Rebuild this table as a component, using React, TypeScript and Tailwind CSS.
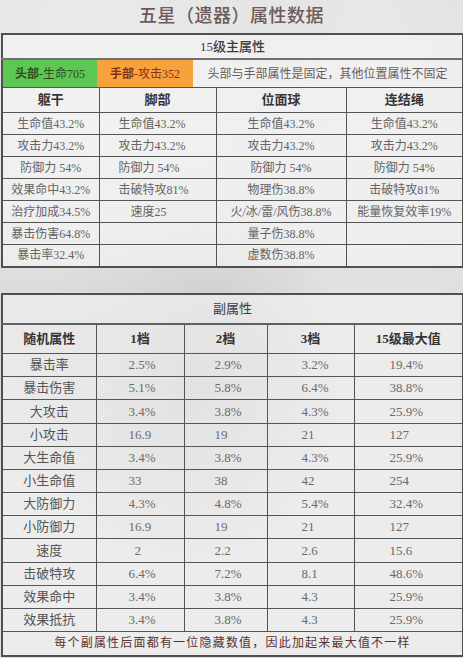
import React from "react";

const main1: string[][] = [
  ["生命值43.2%", "生命值43.2%", "生命值43.2%", "生命值43.2%"],
  ["攻击力43.2%", "攻击力43.2%", "攻击力43.2%", "攻击力43.2%"],
  ["防御力 54%", "防御力 54%", "防御力 54%", "防御力 54%"],
  ["效果命中43.2%", "击破特攻81%", "物理伤38.8%", "击破特攻81%"],
  ["治疗加成34.5%", "速度25", "火/冰/雷/风伤38.8%", "能量恢复效率19%"],
  ["暴击伤害64.8%", "", "量子伤38.8%", ""],
  ["暴击率32.4%", "", "虚数伤38.8%", ""],
];

const sub: string[][] = [
  ["暴击率", "2.5%", "2.9%", "3.2%", "19.4%"],
  ["暴击伤害", "5.1%", "5.8%", "6.4%", "38.8%"],
  ["大攻击", "3.4%", "3.8%", "4.3%", "25.9%"],
  ["小攻击", "16.9", "19", "21", "127"],
  ["大生命值", "3.4%", "3.8%", "4.3%", "25.9%"],
  ["小生命值", "33", "38", "42", "254"],
  ["大防御力", "4.3%", "4.8%", "5.4%", "32.4%"],
  ["小防御力", "16.9", "19", "21", "127"],
  ["速度", "2", "2.2", "2.6", "15.6"],
  ["击破特攻", "6.4%", "7.2%", "8.1", "48.6%"],
  ["效果命中", "3.4%", "3.8%", "4.3", "25.9%"],
  ["效果抵抗", "3.4%", "3.8%", "4.3", "25.9%"],
];

const subPad = ["", "pl-[32px]", "pl-[30px]", "pl-[34px]", "pl-[35px]"];
const mainRowH = ["h-[22px]", "h-[22px]", "h-[22px]", "h-[22px]", "h-[22px]", "h-[22px]", "h-[22px]"];
const subRowH = ["h-[23px]", "h-[23px]", "h-[24px]", "h-[23px]", "h-[23px]", "h-[23px]", "h-[23px]", "h-[23px]", "h-[24px]", "h-[23px]", "h-[23px]", "h-[23px]"];

export default function App() {
  return (
    <div className="w-[463px] h-[658px] overflow-hidden bg-[#dedede] bg-[radial-gradient(ellipse_at_20%_10%,#ececec_0%,transparent_45%),radial-gradient(ellipse_at_80%_8%,#e8e8e8_0%,transparent_40%),radial-gradient(ellipse_at_40%_55%,#c4bfbf_0%,transparent_40%),radial-gradient(ellipse_at_15%_50%,#d2cdcd_0%,transparent_35%)] font-['Liberation_Serif','Noto_Sans_CJK_SC',serif] text-[#646464]">
      <div className="h-[33px] flex items-center justify-center text-[18px] font-medium text-[#6c5a5a] tracking-[0.5px]">
        五星（遗器）属性数据
      </div>

      <div className="px-[1px]">
        <table className="w-[461px] table-fixed border-collapse border-2 border-[#505050] bg-[#f3f3f3]/70">
          <colgroup>
            <col className="w-[97px]" />
            <col className="w-[117px]" />
            <col className="w-[130px]" />
            <col className="w-[117px]" />
          </colgroup>
          <tbody>
            <tr className="h-[25px]">
              <td colSpan={4} className="border-b-2 border-[#707070] text-center text-[13px] font-medium text-[#3c3c3c] p-0">
                15级主属性
              </td>
            </tr>
            <tr className="h-[27px]">
              <td colSpan={4} className="p-0 border-b border-[#555]">
                <div className="flex h-[27px] text-[12px]">
                  <div className="w-[94px] bg-[#5ec653] flex items-center justify-center text-[#2d4a22]">
                    <span className="font-bold">头部</span>-生命705
                  </div>
                  <div className="w-[96px] bg-[#f8a23c] flex items-center justify-center text-[#86301a]">
                    <span className="font-bold">手部</span>-攻击352
                  </div>
                  <div className="flex-1 flex items-center justify-center text-[#6a5c5c]">
                    头部与手部属性是固定，其他位置属性不固定
                  </div>
                </div>
              </td>
            </tr>
            <tr className="h-[25px]">
              {["躯干", "脚部", "位面球", "连结绳"].map((h) => (
                <td key={h} className="border border-[#555] text-center text-[13px] font-bold text-[#353535] p-0">
                  {h}
                </td>
              ))}
            </tr>
            {main1.map((row, i) => (
              <tr key={i} className={mainRowH[i]}>
                {row.map((c, j) => (
                  <td
                    key={j}
                    className={
                      "border border-[#555] text-[12px] p-0 whitespace-nowrap " +
                      (j === 1 ? (c === "速度25" ? "text-left pl-[31px]" : "text-left pl-[19px]") : "text-center")
                    }
                  >
                    {c}
                  </td>
                ))}
              </tr>
            ))}
          </tbody>
        </table>
      </div>

      <div className="h-[25px]" />

      <div className="px-[1px]">
        <table className="w-[461px] table-fixed border-collapse border-2 border-[#505050] bg-[#f3f3f3]/65">
          <colgroup>
            <col className="w-[94px]" />
            <col className="w-[88px]" />
            <col className="w-[83px]" />
            <col className="w-[87px]" />
            <col className="w-[109px]" />
          </colgroup>
          <tbody>
            <tr className="h-[30px]">
              <td colSpan={5} className="border-b-2 border-[#606060] text-center text-[13px] text-[#3c3c3c] p-0">
                副属性
              </td>
            </tr>
            <tr className="h-[30px]">
              {["随机属性", "1档", "2档", "3档", "15级最大值"].map((h) => (
                <td key={h} className="border border-[#555] text-center text-[13px] font-bold text-[#353535] p-0">
                  {h}
                </td>
              ))}
            </tr>
            {sub.map((row, i) => (
              <tr key={i} className={subRowH[i]}>
                {row.map((c, j) => (
                  <td
                    key={j}
                    className={
                      "border border-[#555] p-0 whitespace-nowrap " +
                      (j === 0
                        ? "text-center text-[13px] text-[#555]"
                        : "text-left text-[13px] text-[#6a6a6a] " + subPad[j] + (c === "2" ? " pl-[38px]" : ""))
                    }
                  >
                    {c}
                  </td>
                ))}
              </tr>
            ))}
            <tr className="h-[24px]">
              <td colSpan={5} className="border-t border-[#555] text-center text-[12px] tracking-[1.2px] text-[#5a3232] p-0">
                每个副属性后面都有一位隐藏数值，因此加起来最大值不一样
              </td>
            </tr>
          </tbody>
        </table>
      </div>
    </div>
  );
}
